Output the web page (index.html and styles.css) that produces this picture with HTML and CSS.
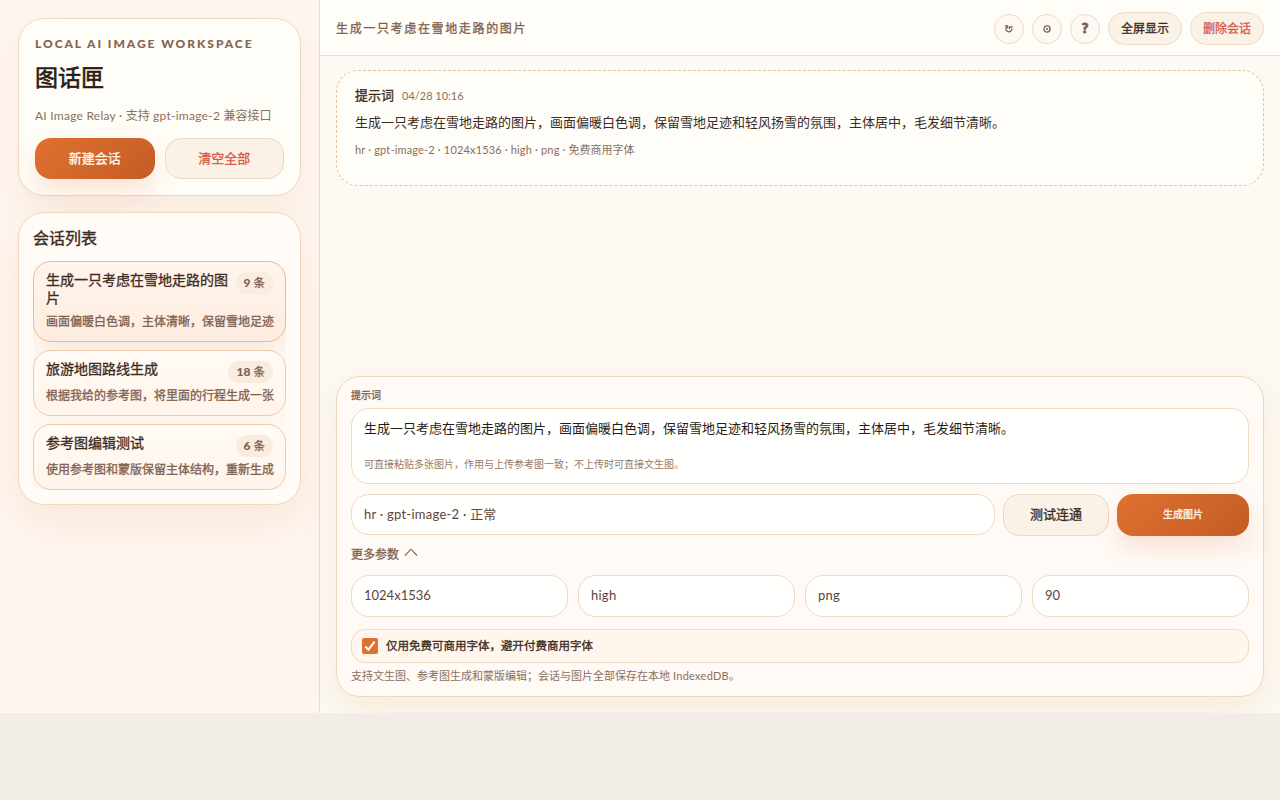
FILE: index.html
```html
<!DOCTYPE html>
<html lang="zh-CN">
<head>
    <meta charset="UTF-8">
    <meta name="viewport" content="width=device-width, initial-scale=1.0">
    <title>图话匣</title>
    <link rel="stylesheet" href="styles.css">
</head>
<body>
    <div class="app">
        <!-- Sidebar -->
        <aside class="sidebar">
            <section class="brand-card">
                <div class="eyebrow">LOCAL AI IMAGE WORKSPACE</div>
                <h1>图话匣</h1>
                <p class="brand-desc"><span class="latin">AI Image Relay · </span>支持<span class="latin"> gpt-image-2 </span>兼容接口</p>
                <div class="brand-actions">
                    <button class="btn primary">新建会话</button>
                    <button class="btn danger">清空全部</button>
                </div>
            </section>

            <section class="list-card">
                <h2>会话列表</h2>
                <div class="session-list">
                    <div class="session active">
                        <div class="session-head">
                            <div class="session-title">生成一只考虑在雪地走路的图片</div>
                            <span class="badge"><b>9</b> 条</span>
                        </div>
                        <div class="session-preview">画面偏暖白色调，主体清晰，保留雪地足迹</div>
                    </div>
                    <div class="session">
                        <div class="session-head">
                            <div class="session-title">旅游地图路线生成</div>
                            <span class="badge"><b>18</b> 条</span>
                        </div>
                        <div class="session-preview">根据我给的参考图，将里面的行程生成一张</div>
                    </div>
                    <div class="session">
                        <div class="session-head">
                            <div class="session-title">参考图编辑测试</div>
                            <span class="badge"><b>6</b> 条</span>
                        </div>
                        <div class="session-preview">使用参考图和蒙版保留主体结构，重新生成</div>
                    </div>
                </div>
            </section>
        </aside>

        <!-- Main area -->
        <main class="main">
            <header class="topbar">
                <div class="topbar-title">生成一只考虑在雪地走路的图片</div>
                <div class="topbar-actions">
                    <button class="icon-btn" aria-label="刷新">
                        <svg width="10" height="10" viewBox="0 0 10 10"><path d="M.9 1.8h2.6v2.5M2.6 2.9A3 3 0 1 0 7.9 4.4M5.4 5.2V2.6M5 3h3.6" fill="none" stroke="currentColor" stroke-width="1.3"/></svg>
                    </button>
                    <button class="icon-btn" aria-label="设置">
                        <svg width="8" height="8" viewBox="0 0 8 8"><circle cx="4" cy="4" r="3.1" fill="none" stroke="currentColor" stroke-width="1.3"/><circle cx="4" cy="4" r="1" fill="currentColor"/></svg>
                    </button>
                    <button class="icon-btn help">?</button>
                    <button class="pill">全屏显示</button>
                    <button class="pill danger">删除会话</button>
                </div>
            </header>

            <div class="messages">
                <article class="message">
                    <div class="message-head">
                        <strong>提示词</strong>
                        <span class="message-time">04/28 10:16</span>
                    </div>
                    <div class="message-text">生成一只考虑在雪地走路的图片，画面偏暖白色调，保留雪地足迹和轻风扬雪的氛围，主体居中，毛发细节清晰。</div>
                    <div class="message-meta"><span class="latin">hr · gpt-image-2 · 1024x1536 · high · png · </span>免费商用字体</div>
                </article>
            </div>

            <section class="composer">
                <div class="field-label">提示词</div>
                <div class="prompt-box">
                    <div class="prompt-text">生成一只考虑在雪地走路的图片，画面偏暖白色调，保留雪地足迹和轻风扬雪的氛围，主体居中，毛发细节清晰。</div>
                    <div class="prompt-hint">可直接粘贴多张图片，作用与上传参考图一致；不上传时可直接文生图。</div>
                </div>
                <div class="run-row">
                    <div class="field"><span class="latin">hr · gpt-image-2 · </span>正常</div>
                    <button class="btn test">测试连通</button>
                    <button class="btn primary generate">生成图片</button>
                </div>
                <div class="more">更多参数
                    <svg width="14" height="9" viewBox="0 0 14 9"><path d="M1 7.5 7 1.2l6 6.3" fill="none" stroke="currentColor" stroke-width="1.1"/></svg>
                </div>
                <div class="params">
                    <div class="field">1024x1536</div>
                    <div class="field latin">high</div>
                    <div class="field latin">png</div>
                    <div class="field">90</div>
                </div>
                <div class="check-row">
                    <span class="checkbox">
                        <svg width="16" height="16" viewBox="0 0 16 16"><path d="m3.3 8.6 3.1 3.1 6.2-8.1" fill="none" stroke="#fff" stroke-width="2.1"/></svg>
                    </span>
                    <span class="check-label">仅用免费可商用字体，避开付费商用字体</span>
                </div>
                <div class="composer-note">支持文生图、参考图生成和蒙版编辑；会话与图片全部保存在本地<span class="latin"> IndexedDB</span>。</div>
            </section>
        </main>
    </div>
</body>
</html>
```

FILE: styles.css
```css
* {
    margin: 0;
    padding: 0;
    box-sizing: border-box;
}

body {
    background-color: #f2ede7;
    color: #3d2b22;
    font-family: Lato, 'Noto Sans CJK SC', sans-serif;
    font-size: 13px;
}

button {
    font-family: inherit;
    cursor: pointer;
}

/* medium weight for Chinese labels, the bold cut is too heavy */
h1,
h2,
.btn,
.pill,
.session-title,
.session-preview,
.badge,
.topbar-title,
.message-head strong,
.field-label,
.more,
.check-label {
    font-weight: 400;
    -webkit-text-stroke: 0.3px currentColor;
}

.latin {
    letter-spacing: 0.25px;
}

.app {
    height: 713px;
    display: grid;
    grid-template-columns: 320px 1fr;
    overflow: hidden;
    background-color: #fffdf8;
}

/* Sidebar */
.sidebar {
    display: flex;
    flex-direction: column;
    gap: 16px;
    padding: 18px;
    background-color: #fff6f0;
    border-right: 1px solid #ecdcca;
}

.brand-card {
    height: 178px;
    padding: 16px;
    background-color: #fffdf7;
    border: 1px solid #eed8bf;
    border-radius: 26px;
    box-shadow: 0 18px 42px rgba(190, 130, 60, 0.09);
}

.eyebrow {
    color: #846450;
    font-size: 12px;
    font-weight: 900;
    line-height: 18px;
    letter-spacing: 1.95px;
    white-space: nowrap;
}

h1 {
    margin-top: 7px;
    color: #2a1b14;
    font-size: 23px;
    line-height: 34px;
    -webkit-text-stroke-width: 0.6px;
}

.brand-desc {
    margin-top: 13px;
    color: #8b6f5d;
    font-size: 12px;
    line-height: 18px;
    white-space: nowrap;
}

.brand-actions {
    display: grid;
    grid-template-columns: 1fr 1fr;
    gap: 10px;
    margin-top: 13px;
}

.btn {
    height: 42px;
    padding-bottom: 3px;
    border: 1px solid #eed8bf;
    border-radius: 16px;
    background-color: #faf2e6;
    color: #3d2b22;
    font-size: 13px;
}

.brand-actions .btn {
    height: 41px;
    padding-bottom: 2px;
}

.btn.primary {
    border: none;
    background: linear-gradient(135deg, #df7130, #c45c24);
    color: #fff7ee;
    box-shadow: 0 12px 24px rgba(223, 100, 50, 0.16);
}

.btn.danger,
.pill.danger {
    color: #d45d48;
}

.list-card {
    padding: 14px;
    background-color: #fffbf6;
    border: 1px solid #f4d6ba;
    border-radius: 26px;
    box-shadow: 0 18px 42px rgba(190, 130, 60, 0.12);
}

h2 {
    position: relative;
    top: -1px;
    font-size: 16px;
    line-height: 24px;
    -webkit-text-stroke-width: 0.4px;
}

.session-list {
    display: grid;
    grid-template-columns: minmax(0, 1fr);
    gap: 8px;
    margin-top: 10px;
    overflow: hidden;
}

.session {
    padding: 10px 12px;
    border: 1px solid #f1c8a4;
    border-radius: 18px;
    background: linear-gradient(180deg, #fffbf6, #fff4eb);
    box-shadow: 0 8px 20px rgba(190, 130, 60, 0.06);
}

.session.active {
    border-color: #edb892;
    background: linear-gradient(180deg, #fff5ec, #fdecdf);
    box-shadow: 0 10px 24px rgba(190, 130, 60, 0.14);
}

.session-head {
    display: flex;
    align-items: flex-start;
    justify-content: space-between;
    gap: 4px;
}

.session-title {
    margin-top: -1px;
    font-size: 14px;
    line-height: 18px;
}

.session.active .session-head {
    height: 37px;
}

.badge {
    flex: none;
    padding: 0 8px;
    border-radius: 11px;
    background-color: #f8ecdf;
    color: #806150;
    font-size: 11px;
    line-height: 22px;
    letter-spacing: 0.2px;
}

.badge b {
    font-weight: 900;
    font-size: 12px;
    -webkit-text-stroke-width: 0;
}

.session-preview {
    margin-top: 4px;
    margin-right: -1px;
    overflow: hidden;
    color: #806150;
    font-size: 12px;
    line-height: 18px;
    white-space: nowrap;
}

/* Main area */
.main {
    display: flex;
    flex-direction: column;
    min-width: 0;
    background-color: #fdfaf4;
}

.topbar {
    display: flex;
    align-items: center;
    justify-content: space-between;
    height: 56px;
    padding: 1px 16px 0;
    background-color: #fffdf8;
    border-bottom: 1px solid #ecdcca;
}

.topbar-title {
    padding-bottom: 2px;
    color: #806150;
    font-size: 12px;
    letter-spacing: 1.65px;
}

.topbar-actions {
    display: flex;
    align-items: center;
    gap: 8px;
}

.icon-btn {
    display: flex;
    align-items: center;
    justify-content: center;
    width: 30px;
    height: 30px;
    margin-top: 1px;
    border: 1px solid #f0d8c0;
    border-radius: 50%;
    background-color: #fff9f5;
    color: #806150;
}

.icon-btn svg {
    margin-top: 1px;
}

.help {
    padding-bottom: 3px;
    font-size: 14px;
    font-weight: 900;
    -webkit-text-stroke: 1px currentColor;
}

.pill {
    width: 74px;
    height: 33px;
    padding-bottom: 1px;
    border: 1px solid #f0dac1;
    border-radius: 17px;
    background-color: #faf2e6;
    color: #3d2b22;
    font-size: 12px;
}

.messages {
    flex: 1;
    padding: 14px 16px;
}

.message {
    height: 116px;
    padding: 14px 18px;
    background-color: #fffdf8;
    border: 1px dashed #e7c29c;
    border-radius: 22px;
}

.message-head {
    display: flex;
    align-items: center;
    gap: 8px;
    line-height: 18px;
}

.message-time {
    padding-top: 2px;
    color: #8b6f5d;
    font-size: 11px;
}

.message-text {
    margin-top: 6px;
    line-height: 22px;
}

.message-meta {
    margin-top: 9px;
    color: #8b6f5d;
    font-size: 11px;
    line-height: 16px;
}

.message-meta .latin {
    letter-spacing: 0.16px;
}

.composer {
    height: 321px;
    margin: 0 16px 16px;
    padding: 10px 14px;
    background-color: #fffaf6;
    border: 1px solid #eed8bf;
    border-radius: 24px;
    box-shadow: 0 12px 34px rgba(210, 140, 65, 0.15);
}

.field-label {
    color: #806150;
    font-size: 10px;
    line-height: 16px;
}

.prompt-box {
    height: 76px;
    margin-top: 5px;
    padding: 8px 12px;
    background-color: #fffffe;
    border: 1px solid #efdac3;
    border-radius: 18px;
}

.prompt-text {
    color: #2a1b14;
    line-height: 22px;
}

.prompt-hint {
    margin-top: 17px;
    color: #97796a;
    font-size: 10px;
    line-height: 16px;
}

.run-row {
    display: grid;
    grid-template-columns: 1fr 106px 132px;
    gap: 8px;
    margin-top: 10px;
}

.field {
    height: 42px;
    padding: 0 12px;
    background-color: #fffffe;
    border: 1px solid #efdac3;
    border-radius: 18px;
    color: #5a453a;
    font-size: 13px;
    line-height: 38px;
}

.run-row .field {
    height: 41px;
}

.btn.generate {
    font-size: 10px;
}

.more {
    display: flex;
    align-items: center;
    gap: 5px;
    margin-top: 10px;
    color: #806150;
    font-size: 12px;
    line-height: 18px;
}

.more svg {
    margin-bottom: 5px;
}

.params {
    display: grid;
    grid-template-columns: repeat(4, 1fr);
    gap: 10px;
    margin-top: 11px;
}

.check-row {
    display: flex;
    align-items: center;
    gap: 8px;
    height: 34px;
    margin-top: 12px;
    padding: 0 10px;
    background-color: #fff7ee;
    border: 1px solid #efdac3;
    border-radius: 14px;
    font-size: 11.5px;
}

.check-label {
    padding-bottom: 3px;
}

.checkbox {
    width: 16px;
    height: 16px;
    border-radius: 2px;
    background-color: #df7130;
}

.checkbox svg {
    display: block;
}

.composer-note {
    margin-top: 5px;
    color: #8b6f5d;
    font-size: 11px;
    line-height: 16px;
}
```
